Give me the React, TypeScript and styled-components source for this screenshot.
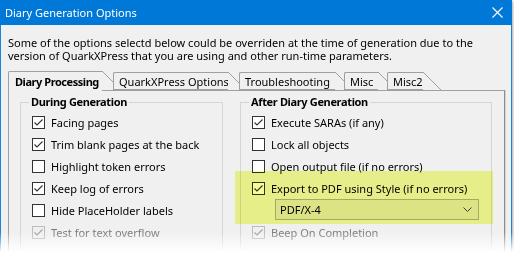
import React from 'react'
import styled, { createGlobalStyle } from 'styled-components'

const GlobalStyle = createGlobalStyle`
  html, body { margin: 0; padding: 0; background: #fff; }
  body {
    font-family: "Noto Sans", "Open Sans", sans-serif;
    font-size: 11px;
    color: #000;
  }
`

const Stage = styled.div`
  position: relative;
  width: 514px;
  height: 256px;
  overflow: hidden;
  background: #fff;
`

const Window = styled.div`
  width: 512px;
  height: 300px;
  box-sizing: border-box;
  border: 1px solid #1883d7;
  border-top: none;
  background: #f0f0f0;
  box-shadow: 1px 1px 3px rgba(0, 0, 0, 0.35);
  display: flex;
  flex-direction: column;
`

const TitleBar = styled.div`
  height: 25px;
  margin: 0 -1px;
  padding: 0 9px 0 5px;
  background: #0078d7;
  color: #fff;
  font-size: 11px;
  display: flex;
  align-items: center;
  justify-content: space-between;
`

const CloseIcon = styled.svg`
  width: 11px;
  height: 11px;
  display: block;
`

const Body = styled.div`
  padding: 11px 6px 0 7px;
  flex: 1;
`

const Description = styled.p`
  margin: 0;
  line-height: 13px;
`

const TabStrip = styled.div`
  margin-top: 9px;
  height: 19px;
  display: flex;
  align-items: flex-end;
`

const Tab = styled.div<{ $active?: boolean; $width: number; $gap: number }>`
  position: relative;
  box-sizing: border-box;
  width: ${(p) => p.$width}px;
  margin-right: ${(p) => p.$gap}px;
  height: ${(p) => (p.$active ? 20 : 18)}px;
  margin-bottom: ${(p) => (p.$active ? -1 : 0)}px;
  padding: ${(p) => (p.$active ? 2 : 1)}px 0 0 ${(p) => (p.$active ? 6 : 5)}px;
  line-height: 16px;
  white-space: nowrap;
  font-weight: ${(p) => (p.$active ? 700 : 400)};
  letter-spacing: ${(p) => (p.$active ? '-0.45px' : '0')};
  background: #f0f0f0;
  border-left: 1px solid #a0a0a0;
  border-top: 1px solid #a0a0a0;
  border-top-left-radius: 2px;
  border-bottom: ${(p) => (p.$active ? 'none' : '1px solid #a0a0a0')};

  &::after {
    content: '';
    position: absolute;
    top: -1px;
    right: -18px;
    width: 18px;
    height: 18px;
    background: linear-gradient(
      to top right,
      #f0f0f0 calc(50% - 0.7px),
      #a0a0a0 50%,
      transparent calc(50% + 0.7px)
    );
  }
`

const Panel = styled.div`
  box-sizing: border-box;
  height: 200px;
  border: 1px solid #a0a0a0;
  border-right-color: #8c8c8c;
  box-shadow: 1px 0 0 #d4d4d4;
  padding: 3px 0 0 11px;
  display: grid;
  grid-template-columns: 203px 252px;
  column-gap: 17px;
  align-items: start;
`

const Group = styled.fieldset`
  margin: 0;
  min-width: 0;
  height: 170px;
  border: 1px solid #d5d5d5;
  padding: 1px 0 0 11px;
`

const GroupTitle = styled.legend`
  font-weight: 700;
  letter-spacing: -0.35px;
  line-height: 16px;
  padding: 0 2px;
  margin-left: -3px;
`

const Row = styled.label<{ $disabled?: boolean }>`
  height: 22px;
  display: flex;
  align-items: center;
  gap: 6px;
  color: ${(p) => (p.$disabled ? '#7a7a7a' : '#000')};
  white-space: nowrap;
`

const Box = styled.span<{ $disabled?: boolean }>`
  box-sizing: border-box;
  width: 13px;
  height: 13px;
  flex: none;
  border: 1px solid ${(p) => (p.$disabled ? '#bcbcbc' : '#333')};
  background: ${(p) => (p.$disabled ? '#f0f0f0' : '#fff')};
  display: flex;
  align-items: center;
  justify-content: center;
`

const SelectRow = styled.div`
  height: 22px;
  padding-left: 23px;
`

const Select = styled.div`
  box-sizing: border-box;
  width: 204px;
  height: 21px;
  border: 1px solid #acacac;
  background: #e5e5e5;
  padding: 0 6px 0 4px;
  display: flex;
  align-items: center;
  justify-content: space-between;
`

const Highlight = styled.div`
  position: absolute;
  left: 235px;
  top: 171px;
  width: 258px;
  height: 53px;
  background: rgb(245, 253, 147);
  mix-blend-mode: multiply;
  pointer-events: none;
`

const Fade = styled.div`
  position: absolute;
  left: 0;
  right: 0;
  bottom: 0;
  height: 24px;
  background: linear-gradient(to bottom, rgba(255, 255, 255, 0), #fff 85%);
  pointer-events: none;
`

type CheckProps = { label: string; checked?: boolean; disabled?: boolean }

const Check = ({ label, checked, disabled }: CheckProps) => (
  <Row $disabled={disabled}>
    <Box $disabled={disabled}>
      {checked && (
        <svg width="11" height="11" viewBox="0 0 11 11">
          <path d="M1.5 5.5 L4 8 L9.5 2.5" fill="none"
            stroke={disabled ? '#a0a0a0' : '#333'} strokeWidth="1.1" />
        </svg>
      )}
    </Box>
    {label}
  </Row>
)

const tabs = [
  { label: 'Diary Processing', width: 94, gap: 11, active: true },
  { label: 'QuarkXPress Options', width: 115, gap: 11 },
  { label: 'Troubleshooting', width: 96, gap: 9 },
  { label: 'Misc', width: 34, gap: 9 },
  { label: 'Misc2', width: 36, gap: 0 }
]

const App = () => {
  return (
    <Stage>
      <GlobalStyle />
      <Window>
        <TitleBar>
          <span>Diary Generation Options</span>
          <CloseIcon viewBox="0 0 11 11">
            <path d="M0.5 0.5 L10.5 10.5 M10.5 0.5 L0.5 10.5" stroke="#fff" strokeWidth="1.1" />
          </CloseIcon>
        </TitleBar>
        <Body>
          <Description>
            Some of the options selectd below could be overriden at the time of generation due to the
            <br />
            version of QuarkXPress that you are using and other run-time parameters.
          </Description>
          <TabStrip>
            {tabs.map((t) => (
              <Tab key={t.label} $active={t.active} $width={t.width} $gap={t.gap}>
                {t.label}
              </Tab>
            ))}
          </TabStrip>
          <Panel>
            <Group>
              <GroupTitle>During Generation</GroupTitle>
              <Check label="Facing pages" checked />
              <Check label="Trim blank pages at the back" checked />
              <Check label="Highlight token errors" />
              <Check label="Keep log of errors" checked />
              <Check label="Hide PlaceHolder labels" />
              <Check label="Test for text overflow" checked disabled />
            </Group>
            <Group>
              <GroupTitle>After Diary Generation</GroupTitle>
              <Check label="Execute SARAs (if any)" checked />
              <Check label="Lock all objects" />
              <Check label="Open output file (if no errors)" />
              <Check label="Export to PDF using Style (if no errors)" checked />
              <SelectRow>
                <Select>
                  <span>PDF/X-4</span>
                  <svg width="9" height="5" viewBox="0 0 9 5">
                    <path d="M0.5 0.5 L4.5 4.5 L8.5 0.5" fill="none" stroke="#444" strokeWidth="1" />
                  </svg>
                </Select>
              </SelectRow>
              <Check label="Beep On Completion" checked disabled />
            </Group>
          </Panel>
        </Body>
      </Window>
      <Highlight />
      <Fade />
    </Stage>
  )
}

export default App
